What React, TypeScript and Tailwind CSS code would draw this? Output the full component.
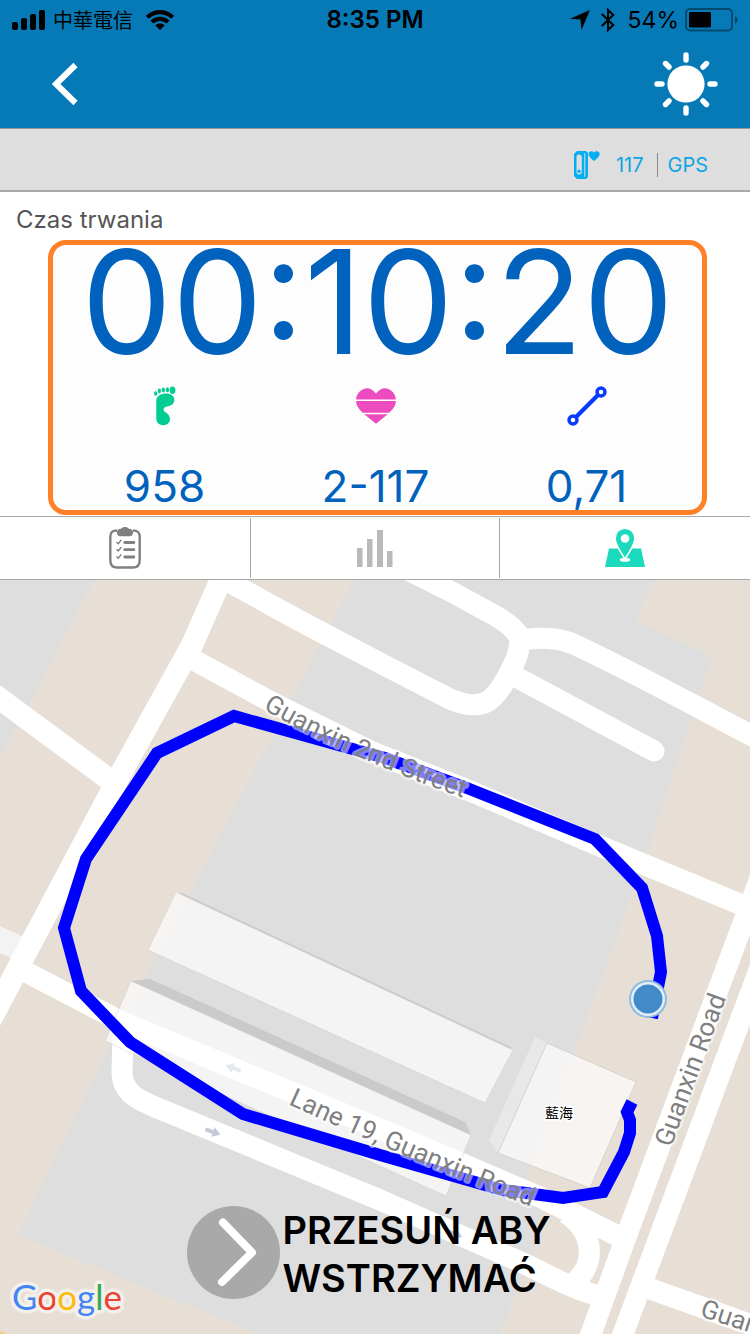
import type { ReactNode } from "react";

function StatusBar() {
  return (
    <div className="grid h-10 grid-cols-[1fr_auto_1fr] items-center px-3 text-black">
      <div className="flex items-center">
        <svg width="34" height="20" viewBox="0 0 34 20">
          <rect x="0" y="12" width="6" height="8" rx="2" />
          <rect x="9" y="8" width="6" height="12" rx="2" />
          <rect x="18" y="4" width="6" height="16" rx="2" />
          <rect x="27" y="0" width="6" height="20" rx="2" />
        </svg>
        <span className="ml-[7px] font-['Noto_Sans_CJK_TC',sans-serif] text-xl leading-6">
          中華電信
        </span>
        <svg className="ml-[13px]" width="28" height="20" viewBox="0 0 28 20">
          <g fill="none" stroke="#000" strokeWidth="4.200">
            <path d="M1.3 7.3C8.5 .4 19.5 .4 26.7 7.3" />
            <path d="M5.9 12.1c4.6-4.4 11.6-4.4 16.2 0" />
          </g>
          <path d="M9.3 15.4c2.8-2.4 6.6-2.4 9.4 0L14 20z" />
        </svg>
      </div>
      <span className="text-2xl leading-6 font-semibold">8:35 PM</span>
      <div className="flex items-center justify-end">
        <svg width="20" height="20" viewBox="0 0 20 20">
          <path d="M20 0 11.500 20 10.500 9.500 0 8.700z" />
        </svg>
        <svg className="ml-[11px]" width="14" height="24" viewBox="0 0 14 24">
          <path
            d="M.8 6 12.300 17 7 22V2l5.300 5L.8 18"
            fill="none"
            stroke="#000"
            strokeWidth="2"
          />
        </svg>
        <span className="mr-[6px] ml-[13px] text-[23px] leading-6">54%</span>
        <svg width="53" height="24" viewBox="0 0 53 24">
          <rect
            x="1"
            y="1"
            width="46"
            height="21.500"
            rx="4"
            fill="none"
            stroke="#044a6e"
            strokeWidth="2"
          />
          <rect x="4" y="4" width="22" height="15.500" rx="1.500" />
          <path d="M50 8c3.500 1.500 3.500 6 0 7.500z" fill="#044a6e" />
        </svg>
      </div>
    </div>
  );
}

function SunIcon() {
  const angles = [0, 45, 90, 135, 180, 225, 270, 315];
  return (
    <svg width="64" height="64" viewBox="-32 -32 64 64">
      <circle r="18.600" fill="#fff" />
      {angles.map((angle) => (
        <path
          key={angle}
          d="M0-24V-29"
          stroke="#fff"
          strokeWidth="5.400"
          strokeLinecap="round"
          transform={`rotate(${angle})`}
        />
      ))}
    </svg>
  );
}

function BandIcon() {
  return (
    <svg width="26" height="28" viewBox="0 0 26 28" fill="#04aeef">
      <path
        fillRule="evenodd"
        d="M3 0h9l2 2v24l-2 2H3l-3-3V3zM5 3.500c-2 0-2.500 1-2.500 3v14c0 2 .5 3 2.500 3s2.800-1 2.800-3v-14c0-2-.8-3-2.800-3zM10.300 2v24l1-.5v-23z"
      />
      <circle cx="5" cy="20.300" r="1.700" />
      <path d="M20 10c-3-2.500-5.500-4.500-5.500-7C14.500 0 18.500-.6 20 1.700 21.500-.6 25.700 0 25.700 3c0 2.500-2.700 4.500-5.700 7z" />
    </svg>
  );
}

function FootIcon() {
  return (
    <svg width="22" height="40" viewBox="0 0 22 40" fill="#00cd92">
      <ellipse cx="1.700" cy="7.500" rx="1.600" ry="2.200" />
      <ellipse cx="5.400" cy="5" rx="1.600" ry="2.400" />
      <ellipse cx="9.300" cy="3.900" rx="1.700" ry="2.500" />
      <ellipse cx="13.400" cy="3.700" rx="1.700" ry="2.500" />
      <ellipse cx="18.500" cy="4.200" rx="2.900" ry="3.800" />
      <path d="M2.300 14C2.800 9.500 8 7.500 12 7.500c5 0 8.500 2.500 8.300 6.500-.3 4-3.300 6-7.300 6.500-3.500.5-4.500 3.500-2 5.500 2.500 1.500 5 3.500 5 7 0 3.600-3 6.200-6.500 6.200-4 0-7.200-2.600-7.200-6.200z" />
    </svg>
  );
}

function HeartIcon() {
  return (
    <svg width="40" height="36" viewBox="0 0 40 36">
      <path
        fill="#ed4cc1"
        d="M20 5.500C17 2 14 .3 11.500.3 5 .3 0 6 0 12.500 0 19 5 23 8 26l12 9.800L32 26c3-3 8-7 8-13.500C40 6 35 .3 28.500.3 26 .3 23 2 20 5.500z"
      />
      <path d="M0 12.300h40M0 25.500h40" stroke="#fff" strokeWidth="1.400" />
    </svg>
  );
}

function DistanceIcon() {
  return (
    <svg width="40" height="40" viewBox="0 0 40 40">
      <g fill="none" stroke="#0839ff">
        <path d="M9 31 31 9" strokeWidth="4.200" />
        <circle cx="6" cy="34" r="4" strokeWidth="3.400" />
        <circle cx="34" cy="6" r="4" strokeWidth="3.400" />
      </g>
    </svg>
  );
}

function ListIcon() {
  return (
    <svg width="32" height="42" viewBox="0 0 32 42">
      <g fill="none" stroke="#808080" strokeWidth="2.400">
        <path d="M8 3.500C3.500 3.500 1.300 5 1.300 10v23c0 5 2 7.500 6.700 7.500h16c4.700 0 6.700-2.500 6.700-7.500V10c0-5-2.200-6.500-6.700-6.500" />
        {[15.5, 22.7, 30].map((y) => (
          <g key={y}>
            <path d={`M7.500 ${y - 0.5}l1.800 1.700 3-3.800`} strokeWidth="1.500" />
            <path d={`M15.800 ${y}h9`} strokeWidth="2.800" strokeLinecap="round" />
          </g>
        ))}
      </g>
      <path
        fill="#808080"
        d="M11 2c1.500 0 2-2 5-2s3.500 2 5 2c2.500 0 3.500 2.500 3 4.500-.4 1.600-1.500 2.700-3 2.700H11c-1.500 0-2.600-1.100-3-2.700C7.500 4.500 8.500 2 11 2z"
      />
    </svg>
  );
}

function ChartIcon() {
  return (
    <svg width="36" height="38" viewBox="0 0 36 38" fill="#b9b9b9">
      <rect x="0" y="19" width="5.500" height="19" />
      <rect x="10" y="10" width="5.500" height="28" />
      <rect x="20" y="1" width="6" height="37" />
      <rect x="30" y="22" width="5.500" height="16" />
    </svg>
  );
}

function MapIcon() {
  return (
    <svg width="40" height="38" viewBox="0 0 40 38">
      <path fill="#1ad9bd" d="M4 19.500h32L40 38H0z" />
      <path
        fill="#1ad9bd"
        stroke="#fff"
        strokeWidth="1.600"
        d="M20-.8c-5.500 0-9.900 4.200-9.900 10C10.100 16 15 21.500 20 30c5-8.500 9.900-14 9.900-20.800 0-5.800-4.400-10-9.900-10z"
      />
      <circle cx="20" cy="9.500" r="4.300" fill="#fff" />
      <ellipse cx="20" cy="30.700" rx="5.200" ry="2" fill="#fff" />
    </svg>
  );
}

type StatProps = { icon: ReactNode; value: string };

function Stat({ icon, value }: StatProps) {
  return (
    <div className="flex flex-col items-center">
      <div className="flex h-10 items-center">{icon}</div>
      <span className="mt-9 text-[44px] leading-[48px]">{value}</span>
    </div>
  );
}

const route =
  "652,1018 661,972 657,936 642,888 595,839 467,788 385,758 234,716 157,753 86,859 64,928 81,991 130,1042 243,1114 380,1155 503,1190 563,1198 603,1192 624,1152 630,1133 630,1120 627,1112 632,1102";

function RouteMap() {
  return (
    <svg
      className="absolute inset-0 h-full w-full font-[Roboto,sans-serif]"
      viewBox="0 580 750 754"
      preserveAspectRatio="xMidYMid slice"
    >
      <rect y="580" width="750" height="754" fill="#e7dfd6" />

      {/* blocks */}
      <g fill="#dedede">
        <path d="M0 580h94L28 706 0 756z" />
        <path d="M354 580h299l-17 40 76 36-66 199-34 95-87 233 20 37-45 114H258L18 1235l92-190 80-152 82-156z" />
      </g>
      <path d="M0 926l26 12-13 21-13-6z" fill="#f3f3f3" />
      <path d="M0 1331l8 3H0z" fill="#eccf8b" />

      {/* streets */}
      <g fill="none" stroke="#fff" strokeWidth="21">
        <path d="M226 568 192 645 120 775 30 945-12 1025" strokeWidth="22" />
        <path d="M-8 693 110 780" strokeWidth="22" />
        <path d="M222 578 300 621 380 663 450 699C483 713 494 700 505 681 518 658 520 650 520 634" />
        <path d="M408 570 450 591 494 615C510 624 517 631 521 640" />
        <path d="M515 641C540 636 557 638 571 643 620 665 680 698 760 740" />
        <path d="M518 678 654 751" strokeLinecap="round" />
        <path d="M192 659 275 704 370 751 470 791 602 847 742 905" />
        <path d="M762 873 733 950 629 1229 588 1342" />
        <path d="M765 954 620 1342" />
        <path d="M26 972 120 1021 233 1068 390 1133 540 1197 620 1237" />
        <path d="M123 1035 122 1072C122 1095 143 1102 160 1109L380 1200 525 1264C550 1276 575 1290 597 1295" />
        <path d="M566 1213C597 1234 596 1268 570 1286" />
        <path d="M645 1287 690 1303 760 1328" />
      </g>

      {/* buildings */}
      <path
        d="M176 892 513 1050 485 1103 148 950z"
        fill="#fff"
        fillOpacity="0.65"
        stroke="#ccc"
        strokeWidth="0.500"
      />
      <path d="M180 893 511 1048" stroke="#cacaca" strokeWidth="1.500" />
      <path d="M131 981l19-2 315 143 6 13z" fill="#cacaca" />
      <path
        d="M131 981 471 1135 446 1196 105 1041z"
        fill="#fff"
        fillOpacity="0.65"
        stroke="#ccc"
        strokeWidth="0.500"
      />
      <path d="M535 1037l12 6-49 110-9-13z" fill="#e8e8e8" />
      <path
        d="M547 1043 636 1082 590 1188 498 1153z"
        fill="#fff"
        fillOpacity="0.65"
        stroke="#c4c4c4"
        strokeWidth="0.600"
      />

      {/* one way marks */}
      <path
        d="M-8 0 0-5v3h8v4H0v3z"
        fill="#e6e8f1"
        transform="translate(233 1068) rotate(20)"
      />
      <path
        d="M8 0 0-5v3h-8v4H0v3z"
        fill="#c6c9d9"
        transform="translate(213 1132) rotate(20)"
      />
      <path
        d="M8 0 0-5v3h-8v4H0v3z"
        fill="#c6c9d9"
        transform="translate(455 1234) rotate(22)"
      />

      {/* tracked route */}
      <polyline points={route} fill="none" stroke="#00f" strokeWidth="12" />

      <defs>
        <path id="second-street" d="M263 709Q345 757 480 804" />
        <path id="lane" d="M288 1104Q400 1156 560 1218" />
        <path id="road" d="M671 1148 740 960" />
        <path id="road-end" d="M699 1316 800 1349" />
      </defs>
      <g
        fill="#7f7f7f"
        fontSize="26"
        stroke="#fff"
        strokeOpacity="0.500"
        strokeWidth="5"
        strokeLinejoin="round"
        paintOrder="stroke"
      >
        <text>
          <textPath href="#second-street">Guanxin 2nd Street</textPath>
        </text>
        <text>
          <textPath href="#lane">Lane 19, Guanxin Road</textPath>
        </text>
        <text>
          <textPath href="#road">Guanxin Road</textPath>
        </text>
        <text>
          <textPath href="#road-end">Guanxin</textPath>
        </text>
      </g>
      <text
        x="559"
        y="1118"
        textAnchor="middle"
        fontSize="14"
        stroke="#fff"
        strokeWidth="3"
        paintOrder="stroke"
        className="font-['Noto_Sans_CJK_TC',sans-serif]"
      >
        藍海
      </text>

      {/* current position */}
      <circle cx="648" cy="999" r="19" fill="#8fbbe0" />
      <circle cx="648" cy="999" r="17" fill="#e4eef7" />
      <circle cx="648" cy="999" r="14.500" fill="#428bca" />
    </svg>
  );
}

function GoogleLogo() {
  return (
    <svg
      className="absolute bottom-1 left-2 font-[Lato,sans-serif]"
      width="124"
      height="56"
      viewBox="0 0 124 56"
    >
      <text
        x="4"
        y="36"
        fontSize="35"
        stroke="#f3efea"
        strokeWidth="7"
        strokeLinejoin="round"
        paintOrder="stroke"
      >
        <tspan fill="#4285f4">G</tspan>
        <tspan fill="#ea4335">o</tspan>
        <tspan fill="#fbbc05">o</tspan>
        <tspan fill="#4285f4">g</tspan>
        <tspan fill="#34a853">l</tspan>
        <tspan fill="#ea4335">e</tspan>
      </text>
    </svg>
  );
}

function App() {
  return (
    <div className="flex min-h-screen flex-col bg-white font-[Inter,sans-serif]">
      {/* BEGIN: Header */}
      <header className="border-b border-[#999] bg-[#067ab6]">
        <StatusBar />
        <div className="flex h-[88px] items-center justify-between px-8">
          <button type="button" aria-label="Wstecz" className="px-5">
            <svg width="26" height="44" viewBox="0 0 26 44">
              <path
                d="M23.500 3 4 22 23.500 41"
                fill="none"
                stroke="#fff"
                strokeWidth="6"
              />
            </svg>
          </button>
          <button type="button" aria-label="Jasność">
            <SunIcon />
          </button>
        </div>
      </header>
      {/* END: Header */}

      <div className="flex h-[63px] items-center justify-end border-b-2 border-[#a8a8a8] bg-[#dedede] pt-2.5 pr-[42px] text-xl text-[#10a5e5]">
        <BandIcon />
        <span className="ml-4">117</span>
        <span className="ml-[14px] h-6 w-px bg-[#888]" />
        <span className="ml-[9px]">GPS</span>
      </div>

      {/* BEGIN: Workout summary */}
      <section>
        <h1 className="px-4 pt-3 pb-1 text-2xl leading-8 text-[#555]">
          Czas trwania
        </h1>
        <div className="mr-[43px] mb-px ml-12 h-[275px] rounded-[18px] border-5 border-[#ff8027] bg-[#fdfdfd] text-[#0062bd]">
          <div className="text-center text-[144px] leading-[113px]">
            00:10:20
          </div>
          <div className="mt-7 grid grid-cols-3 pr-2.5 pl-1.5">
            <Stat icon={<FootIcon />} value="958" />
            <Stat icon={<HeartIcon />} value="2-117" />
            <Stat icon={<DistanceIcon />} value="0,71" />
          </div>
        </div>
      </section>
      {/* END: Workout summary */}

      <nav className="grid h-16 grid-cols-3 border-y border-[#a8a8a8] py-px">
        <button
          type="button"
          aria-label="Lista"
          className="flex items-center justify-center"
        >
          <ListIcon />
        </button>
        <button
          type="button"
          aria-label="Wykres"
          className="flex items-center justify-center border-x border-[#a8a8a8]"
        >
          <ChartIcon />
        </button>
        <button
          type="button"
          aria-label="Mapa"
          className="flex items-center justify-center"
        >
          <MapIcon />
        </button>
      </nav>

      <main className="relative min-h-[480px] flex-1 overflow-hidden">
        <RouteMap />
        <GoogleLogo />
        <button
          type="button"
          className="absolute inset-x-0 bottom-8 flex items-center justify-center gap-0.5 pr-3 text-left text-[38px] leading-[48px] font-semibold text-black"
        >
          <svg width="93" height="93" viewBox="0 0 93 93">
            <circle cx="46.500" cy="46.500" r="46.500" fill="#a9a9a9" />
            <path
              d="M36 16.500 65 46.500 35 76"
              fill="none"
              stroke="#fff"
              strokeWidth="8"
              strokeLinecap="round"
              strokeLinejoin="round"
            />
          </svg>
          <span className="pt-1">
            PRZESUŃ ABY
            <br />
            WSTRZYMAĆ
          </span>
        </button>
      </main>
    </div>
  );
}

export default App;
